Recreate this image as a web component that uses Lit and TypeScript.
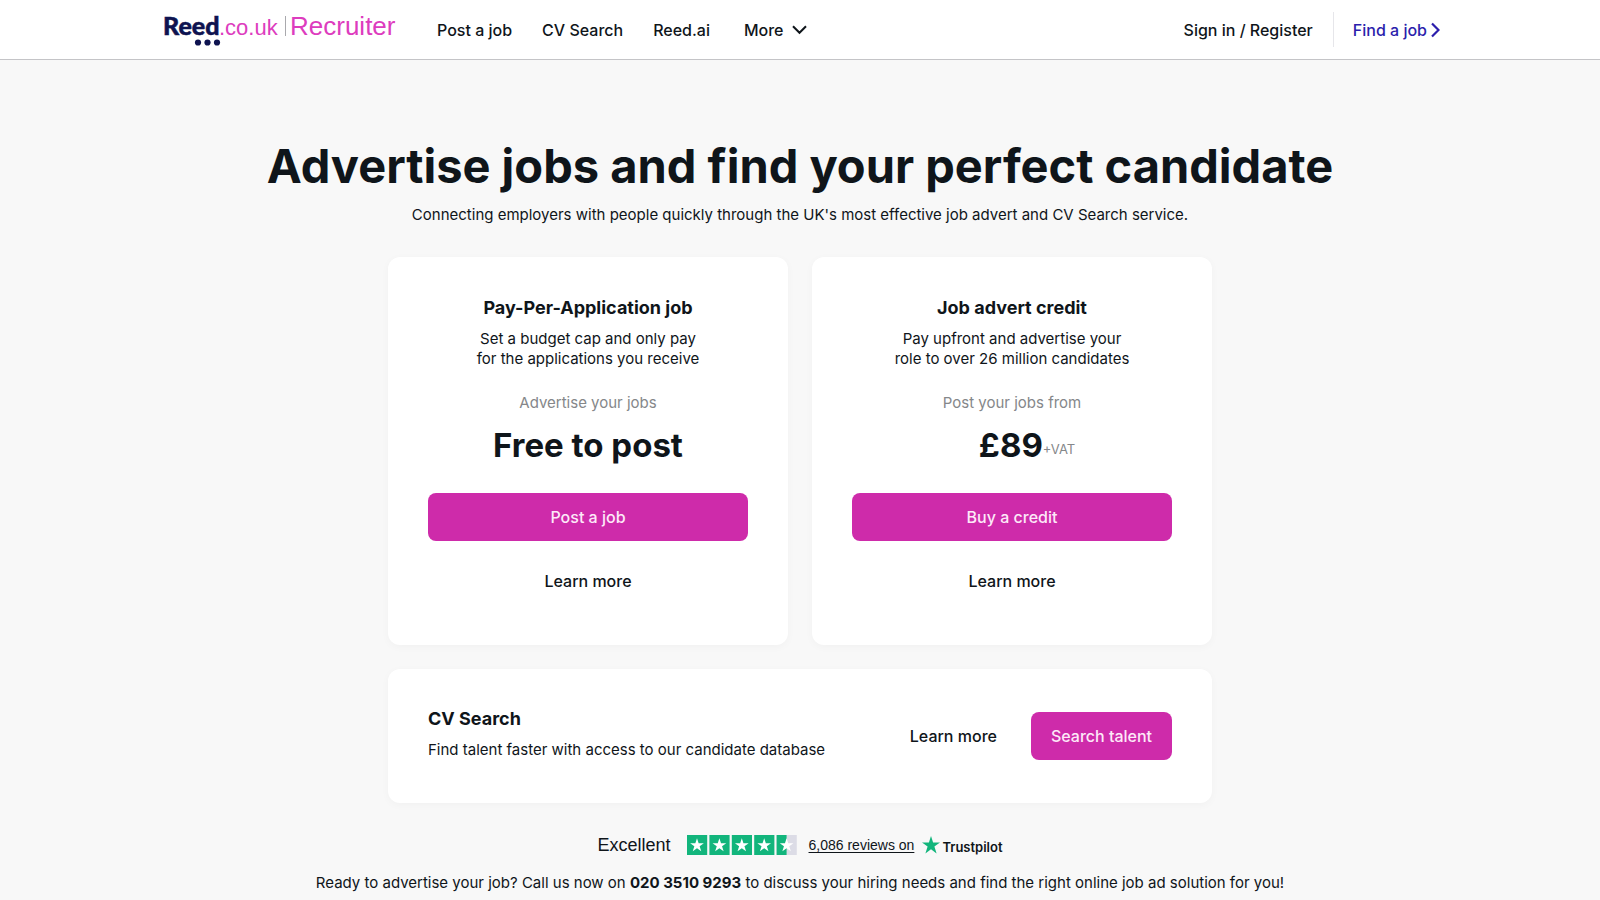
import { LitElement, html, css, svg } from "lit";
import { customElement } from "lit/decorators.js";

interface Product {
  title: string;
  lines: [string, string];
  caption: string;
  price: string;
  suffix?: string;
  action: string;
}

const products: Product[] = [
  {
    title: "Pay-Per-Application job",
    lines: ["Set a budget cap and only pay", "for the applications you receive"],
    caption: "Advertise your jobs",
    price: "Free to post",
    action: "Post a job",
  },
  {
    title: "Job advert credit",
    lines: ["Pay upfront and advertise your", "role to over 26 million candidates"],
    caption: "Post your jobs from",
    price: "£89",
    suffix: "+VAT",
    action: "Buy a credit",
  },
];

const STAR = "M10 3.2l1.65 5h5.2l-4.2 3.1 1.6 5L10 13.2l-4.25 3.1 1.6-5-4.2-3.1h5.2z";

@customElement("app-root")
export class AppRoot extends LitElement {
  static styles = css`
    :host {
      display: block;
      min-height: 100vh;
      background: #f8f8f8;
      color: #0f151a;
      font: 400 15px/20px Inter, "Open Sans", sans-serif;
    }
    * { box-sizing: border-box; }
    h1, h2, p { margin: 0; }
    a { color: inherit; text-decoration: none; }
    button { font: inherit; color: inherit; border: 0; background: none; padding: 0; cursor: pointer; }
    header { background: #fff; border-bottom: 1px solid #c4c4c7; }
    .bar {
      max-width: 1280px;
      height: 59px;
      margin: 0 auto;
      display: flex;
      align-items: center;
      font-weight: 500;
      font-size: 16px;
    }
    .logo { display: flex; flex: none; margin-right: 37px; }
    .nav { display: flex; align-items: center; gap: 30px; }
    .more { display: flex; align-items: center; gap: 8px; margin-left: 4px; }
    .account { margin-left: auto; display: flex; align-items: center; }
    .find {
      display: flex;
      align-items: center;
      gap: 3px;
      height: 35px;
      margin-left: 20px;
      padding-left: 19px;
      border-left: 1px solid #e6e6ea;
      color: #2b1eac;
    }
    svg { display: block; flex: none; }
    main {
      padding: 78px 24px 0;
      display: flex;
      flex-direction: column;
      align-items: center;
      text-align: center;
    }
    h1 { font-size: 47px; line-height: 56px; font-weight: 700; }
    .intro { margin-top: 9px; line-height: 24px; }
    .offers {
      width: 100%;
      max-width: 824px;
      margin-top: 30px;
      display: grid;
      grid-template-columns: 1fr 1fr;
      gap: 24px;
    }
    .card { background: #fff; border-radius: 12px; box-shadow: 0 2px 8px rgba(0, 0, 0, 0.03); }
    .product { padding: 40px; display: flex; flex-direction: column; }
    h2 { font-size: 18px; line-height: 22px; font-weight: 700; }
    .desc { margin-top: 10px; }
    .caption { margin-top: 24px; color: #85878a; }
    .price {
      height: 40px;
      margin-top: 12px;
      display: flex;
      justify-content: center;
      align-items: flex-end;
      font-size: 33px;
      line-height: 40px;
      font-weight: 700;
    }
    .vat { font-size: 13px; line-height: 32px; font-weight: 400; color: #85878a; margin-right: -30px; }
    .primary {
      height: 48px;
      border-radius: 8px;
      background: #ce2baa;
      color: #fde9f8;
      font-size: 16px;
      font-weight: 500;
      padding: 0 20px;
    }
    .product .primary { margin-top: 28px; }
    .link { font-size: 16px; font-weight: 500; }
    .product .link { margin-top: 16px; padding: 14px 0; }
    .search {
      grid-column: 1 / -1;
      padding: 39px 40px;
      display: flex;
      align-items: center;
      justify-content: space-between;
      text-align: left;
    }
    .summary { padding-bottom: 4px; }
    .actions { display: flex; align-items: center; gap: 34px; }
    .trust {
      margin-top: 30px;
      display: flex;
      align-items: center;
      font-family: "Liberation Sans", Arial, sans-serif;
    }
    .rating { font-size: 18px; margin-right: 16px; }
    .reviews {
      font-size: 14px;
      text-decoration: underline;
      text-underline-offset: 2px;
      margin: 0 8px 0 12px;
    }
    .brand { display: flex; align-items: center; gap: 2px; font: 600 13px/20px Inter, sans-serif; }
    .name { padding-top: 4px; }
    .call { margin-top: 16px; }
  `;

  private logo() {
    return svg`
      <svg width="240" height="42" viewBox="-4 -4 240 42" role="img" aria-label="Reed.co.uk Recruiter">
        <text x="-1" y="22" font-family="Lato, sans-serif" font-weight="900" font-size="25" fill="#0e1350" stroke="#0e1350" stroke-width="0.5">Reed</text>
        <text x="55" y="22" font-family="Liberation Sans, Arial, sans-serif" font-size="22" fill="#dd3cbe">.co.uk</text>
        <path d="M121.5 3v20" stroke="#a9a9ad" />
        <text x="126" y="22" font-family="Liberation Sans, Arial, sans-serif" font-size="26" fill="#dd3cbe">Recruiter</text>
        <g fill="#0e1350">
          <circle cx="34" cy="29.5" r="3.1" />
          <circle cx="43.5" cy="29.5" r="3.1" />
          <circle cx="53" cy="29.5" r="3.1" />
        </g>
      </svg>`;
  }

  private stars() {
    return svg`
      <svg width="110" height="20" viewBox="0 0 110 20" role="img" aria-label="Four and a half stars">
        ${[0, 1, 2, 3, 4].map(
          (i) => svg`
            <g transform=${`translate(${i * 22.4} 0)`}>
              <path d="M0 0h20.2v20H0z" fill=${i === 4 ? "#dcdce6" : "#12b57c"} />
              ${i === 4 ? svg`<path d="M0 0h10v20H0z" fill="#12b57c" />` : ""}
              <path d=${STAR} fill="#fff" />
            </g>`
        )}
      </svg>`;
  }

  private product(p: Product) {
    return html`
      <section class="card product">
        <h2>${p.title}</h2>
        <p class="desc">${p.lines[0]}<br />${p.lines[1]}</p>
        <p class="caption">${p.caption}</p>
        <p class="price">${p.price}${p.suffix ? html`<span class="vat">${p.suffix}</span>` : ""}</p>
        <button class="primary">${p.action}</button>
        <a class="link" href="#">Learn more</a>
      </section>`;
  }

  render() {
    return html`
      <header>
        <div class="bar">
          <a class="logo" href="#">${this.logo()}</a>
          <nav class="nav">
            <a href="#">Post a job</a>
            <a href="#">CV Search</a>
            <a href="#">Reed.ai</a>
            <button class="more">
              More
              <svg width="15" height="10" viewBox="0 0 15 10" fill="none" stroke="currentColor" stroke-width="2">
                <path d="M1 1.2l6.5 6.6L14 1.2" />
              </svg>
            </button>
          </nav>
          <div class="account">
            <a href="#">Sign in / Register</a>
            <a class="find" href="#">
              Find a job
              <svg width="10" height="16" viewBox="1 0 10 16" fill="none" stroke="currentColor" stroke-width="2.2">
                <path d="M3 1.5L9.5 8 3 14.5" />
              </svg>
            </a>
          </div>
        </div>
      </header>
      <main>
        <h1>Advertise jobs and find your perfect candidate</h1>
        <p class="intro">
          Connecting employers with people quickly through the UK's most effective job advert and CV Search service.
        </p>
        <div class="offers">
          ${products.map((p) => this.product(p))}
          <section class="card search">
            <div class="summary">
              <h2>CV Search</h2>
              <p class="desc">Find talent faster with access to our candidate database</p>
            </div>
            <div class="actions">
              <a class="link" href="#">Learn more</a>
              <button class="primary">Search talent</button>
            </div>
          </section>
        </div>
        <div class="trust">
          <span class="rating">Excellent</span>
          ${this.stars()}
          <a class="reviews" href="#">6,086 reviews on</a>
          <span class="brand">
            <svg width="18" height="18" viewBox="0 0 18 18">
              <path d="M9 0l2.1 6.6H18l-5.6 4 2.2 6.9L9 13.3l-5.6 4.2 2.2-6.9L0 6.6h6.9z" fill="#12b57c" />
            </svg>
            <span class="name">Trustpilot</span>
          </span>
        </div>
        <p class="call">
          Ready to advertise your job? Call us now on <b>020 3510 9293</b> to discuss your hiring needs and find the
          right online job ad solution for you!
        </p>
      </main>
    `;
  }
}
